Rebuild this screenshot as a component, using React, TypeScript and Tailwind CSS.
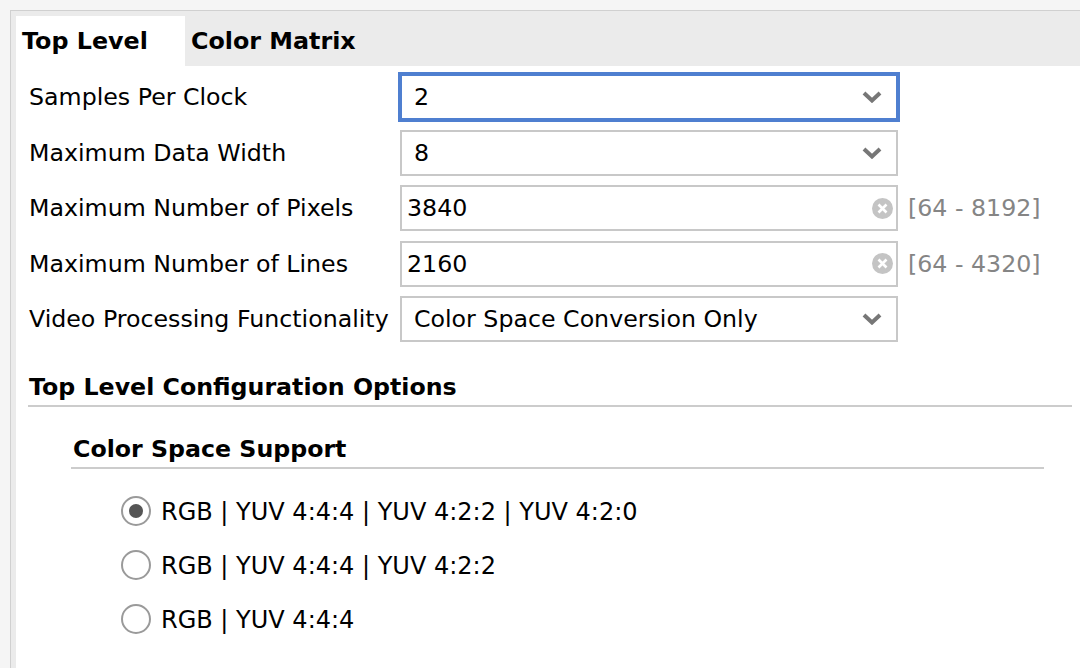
import { useState } from 'react';

type Row = {
    label: string;
    value: string;
    kind: 'select' | 'input';
    range?: string;
};

const ROWS: Row[] = [
    { label: 'Samples Per Clock', value: '2', kind: 'select' },
    { label: 'Maximum Data Width', value: '8', kind: 'select' },
    { label: 'Maximum Number of Pixels', value: '3840', kind: 'input', range: '[64 - 8192]' },
    { label: 'Maximum Number of Lines', value: '2160', kind: 'input', range: '[64 - 4320]' },
    { label: 'Video Processing Functionality', value: 'Color Space Conversion Only', kind: 'select' },
];

const OPTIONS = [
    'RGB | YUV 4:4:4 | YUV 4:2:2 | YUV 4:2:0',
    'RGB | YUV 4:4:4 | YUV 4:2:2',
    'RGB | YUV 4:4:4',
];

const Chevron = () => (
    <svg width="20" height="12" viewBox="0 0 20 12" className="shrink-0">
        <polyline points="2,2 10,9.5 18,2" fill="none" stroke="#777777" strokeWidth="4" />
    </svg>
);

const ClearIcon = () => (
    <svg width="21" height="21" viewBox="0 0 21 21" className="shrink-0">
        <circle cx="10.5" cy="10.5" r="10.5" fill="#c4c4c4" />
        <path d="M6.5 6.5 L14.5 14.5 M14.5 6.5 L6.5 14.5" stroke="#ffffff" strokeWidth="2.6" />
    </svg>
);

const App = () => {

    const [tab, setTab] = useState('top');
    const [choice, setChoice] = useState(0);

    return (
        <div className="w-[1080px] h-[668px] overflow-hidden bg-[#f5f5f5] pt-[10px] pl-[10px] font-['DejaVu_Sans','Liberation_Sans',sans-serif] text-black">
            <div className="h-full flex flex-col border-l border-t border-[#d0d0d0] bg-[#ebebeb] pl-[5px] pt-[5px]">
                <div className="flex h-[50px] text-[23.8px] font-bold">
                    <button onClick={() => setTab('top')} className={"w-[169px] pl-[6px] pt-[2px] text-left " + (tab === 'top' ? 'bg-white' : '')}>Top Level</button>
                    <button onClick={() => setTab('matrix')} className={"px-[6px] pt-[2px] text-left " + (tab === 'matrix' ? 'bg-white' : '')}>Color Matrix</button>
                </div>
                <div className="flex-1 bg-white pl-[12px] pr-[8px] pt-[8px] text-[23.7px]">
                    <div className="flex flex-col gap-[9.5px]">
                        {ROWS.map((row, i) => (
                            <div key={row.label} className="flex items-center h-[46px]">
                                <div className="w-[372px] shrink-0 pl-[1px] pt-[2px] leading-none whitespace-nowrap">{row.label}</div>
                                <div className={"w-[498px] h-[46px] shrink-0 flex items-center border-2 " + (i === 0 ? 'border-[#4f7fd0] ring-2 ring-[#4f7fd0]' : 'border-[#c8c8c8]')}>
                                    {row.kind === 'select' ? (
                                        <>
                                            <span className="flex-1 pl-[12px] pt-[2px] leading-none">{row.value}</span>
                                            <span className="pr-[14px] flex items-center"><Chevron /></span>
                                        </>
                                    ) : (
                                        <>
                                            <span className="flex-1 pl-[5px] pt-[2px] leading-none">{row.value}</span>
                                            <span className="pr-[3px] flex items-center"><ClearIcon /></span>
                                        </>
                                    )}
                                </div>
                                {row.range && <span className="ml-[10px] pt-[2px] text-[#858585] leading-none whitespace-nowrap">{row.range}</span>}
                            </div>
                        ))}
                    </div>

                    <div className="mt-[30px] border-b-2 border-[#cccccc] pt-[1px] pb-[4px]">
                        <p className="font-bold leading-[28px] pl-[1px]">Top Level Configuration Options</p>
                    </div>

                    <div className="ml-[43px] mr-[28px] mt-[27px]">
                        <div className="border-b-2 border-[#cccccc] pt-[1px] pb-[4px]">
                            <p className="font-bold leading-[28px] pl-[2px]">Color Space Support</p>
                        </div>
                        <div className="mt-[15px] pl-[50px] text-[24px]">
                            {OPTIONS.map((opt, i) => (
                                <div key={opt} onClick={() => setChoice(i)} className="flex items-center h-[54px] gap-[10px] cursor-pointer">
                                    <span className="w-[30px] h-[30px] shrink-0 rounded-full border-2 border-[#9a9a9a] flex items-center justify-center">
                                        {choice === i && <span className="w-[14px] h-[14px] rounded-full bg-[#555555]"></span>}
                                    </span>
                                    <span className="pt-[1px] leading-none whitespace-nowrap">{opt}</span>
                                </div>
                            ))}
                        </div>
                    </div>
                </div>
            </div>
        </div>
    )
}

export default App
